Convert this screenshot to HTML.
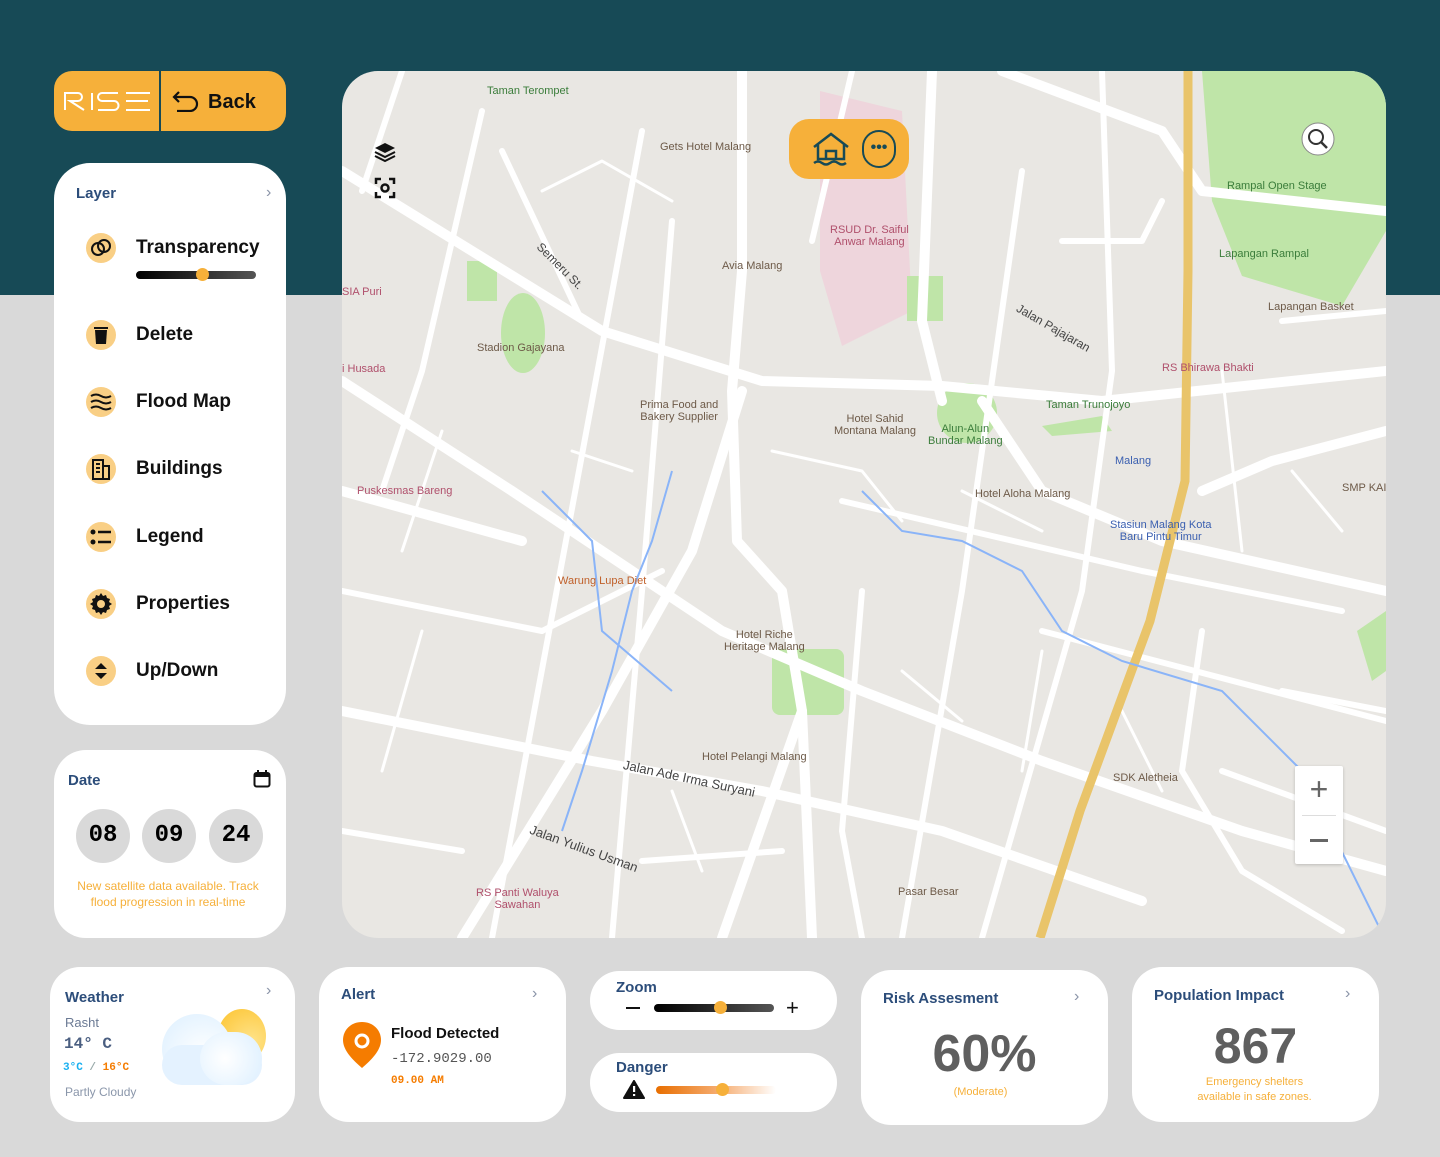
<!DOCTYPE html>
<html><head><meta charset="utf-8">
<style>
*{margin:0;padding:0;box-sizing:border-box}
body{width:1440px;height:1157px;position:relative;background:#d9d9d9;font-family:"Liberation Sans",sans-serif;overflow:hidden}
.top{position:absolute;left:0;top:0;width:1440px;height:295px;background:#174a56}
.card{position:absolute;background:#fff;border-radius:32px}
.h{color:#2c4d7a;font-size:15px;font-weight:bold}
.chev{position:absolute;color:#8a94a8;font-size:16px}
.mono{font-family:"Liberation Mono",monospace}
.item{position:absolute;left:32px;display:flex;align-items:center;font-size:19px;font-weight:bold;color:#111}
.ic{width:30px;height:30px;border-radius:50%;background:#f9cf85;display:flex;align-items:center;justify-content:center;margin-right:20px}
.lbl{position:absolute;font-size:11px;color:#6d5a48;white-space:nowrap}
.slider{position:absolute;height:8px;border-radius:4px;background:linear-gradient(90deg,#000,#555)}
.knob{position:absolute;width:13px;height:13px;border-radius:50%;background:#f6b03a;top:-3px}
</style></head><body>
<div class="top"></div>

<div style="position:absolute;left:54px;top:71px;width:232px;height:60px;background:#f6b03a;border-radius:18px">
 <div style="position:absolute;left:105px;top:0;width:2px;height:60px;background:#174a56"></div>
 <svg style="position:absolute;left:10px;top:20px" width="88" height="20" viewBox="0 0 88 20" fill="none" stroke="#fff" stroke-width="2"><path d="M1 19 V2 H14 a4 4 0 0 1 0 8 H6 L20 19"/><path d="M28 2 V19"/><path d="M54 2 H38 a4 4 0 0 0 0 8 H50 a4 4 0 0 1 0 9 H34"/><path d="M86 2 H62 M62 10 H84 M62 19 H86"/></svg>
 <svg style="position:absolute;left:118px;top:19px" width="28" height="22" viewBox="0 0 28 22"><path d="M7 2 L2 7 L7 12 M2 7 H18 a7 7 0 0 1 0 14 H5" fill="none" stroke="#111" stroke-width="2.2"/></svg>
 <div style="position:absolute;left:154px;top:20px;font-size:20px;font-weight:bold;color:#111">Back</div>
</div>

<div class="card" style="left:54px;top:163px;width:232px;height:562px;border-radius:36px">
 <div class="h" style="position:absolute;left:22px;top:22px">Layer</div>
 <div class="chev" style="left:212px;top:21px">›</div>
 <div class="item" style="top:70px"><div class="ic"><svg width="22" height="22" viewBox="0 0 22 22"><circle cx="8" cy="12" r="6" fill="none" stroke="#111" stroke-width="2"/><circle cx="14" cy="9" r="6" fill="none" stroke="#111" stroke-width="2"/></svg></div>Transparency</div>
 <div class="slider" style="left:82px;top:108px;width:120px"><div class="knob" style="left:60px"></div></div>
 <div class="item" style="top:157px"><div class="ic"><svg width="14" height="18" viewBox="0 0 14 18"><rect x="0" y="1" width="14" height="2" fill="#111"/><path d="M1 4 H13 L12 18 H2 Z" fill="#111"/></svg></div>Delete</div>
 <div class="item" style="top:224px"><div class="ic"><svg width="22" height="18" viewBox="0 0 22 18"><path d="M1 3 q5 -3 10 0 t10 0 M1 9 q5 -3 10 0 t10 0 M1 15 q5 -3 10 0 t10 0" fill="none" stroke="#111" stroke-width="2"/></svg></div>Flood Map</div>
 <div class="item" style="top:291px"><div class="ic"><svg width="20" height="22" viewBox="0 0 20 22"><path d="M2 2 H12 V21 H2 Z M12 8 H18 V21 H12" fill="none" stroke="#111" stroke-width="2"/><path d="M5 6h4M5 10h4M5 14h4" stroke="#111" stroke-width="2"/></svg></div>Buildings</div>
 <div class="item" style="top:359px"><div class="ic"><svg width="22" height="18" viewBox="0 0 22 18"><circle cx="3" cy="4" r="2.5" fill="#111"/><circle cx="3" cy="14" r="2.5" fill="#111"/><path d="M8 4H21M8 14H21" stroke="#111" stroke-width="2.5"/></svg></div>Legend</div>
 <div class="item" style="top:426px"><div class="ic"><svg width="24" height="24" viewBox="0 0 24 24"><path d="M12 1l2 3 3-1 1 3 3 1-1 3 3 2-3 2 1 3-3 1-1 3-3-1-2 3-2-3-3 1-1-3-3-1 1-3-3-2 3-2-1-3 3-1 1-3 3 1z" fill="#111"/><circle cx="12" cy="12" r="4" fill="#f9cf85"/></svg></div>Properties</div>
 <div class="item" style="top:493px"><div class="ic"><svg width="16" height="20" viewBox="0 0 16 20"><path d="M2 8 L8 2 L14 8 Z M2 12 L8 18 L14 12 Z" fill="#111"/></svg></div>Up/Down</div>
</div>

<div class="card" style="left:54px;top:750px;width:232px;height:188px">
 <div class="h" style="position:absolute;left:14px;top:22px">Date</div>
 <svg style="position:absolute;left:199px;top:20px" width="18" height="18" viewBox="0 0 18 18"><rect x="1.5" y="3" width="15" height="13.5" rx="2" fill="none" stroke="#111" stroke-width="2"/><rect x="1.5" y="3" width="15" height="4" fill="#111"/><path d="M5 0v4M13 0v4" stroke="#111" stroke-width="2"/></svg>
 <div class="mono" style="position:absolute;left:22px;top:59px;width:54px;height:54px;border-radius:50%;background:#d9d9d9;font-size:24px;font-weight:bold;text-align:center;line-height:54px">08</div>
 <div class="mono" style="position:absolute;left:88px;top:59px;width:54px;height:54px;border-radius:50%;background:#d9d9d9;font-size:24px;font-weight:bold;text-align:center;line-height:54px">09</div>
 <div class="mono" style="position:absolute;left:155px;top:59px;width:54px;height:54px;border-radius:50%;background:#d9d9d9;font-size:24px;font-weight:bold;text-align:center;line-height:54px">24</div>
 <div style="position:absolute;left:22px;top:128px;width:184px;text-align:center;color:#f6b03a;font-size:12px;line-height:16px">New satellite data available. Track flood progression in real-time</div>
</div>

<div style="position:absolute;left:342px;top:71px;width:1044px;height:867px;border-radius:36px;overflow:hidden;background:#e9e7e3">
<svg width="1044" height="867" viewBox="0 0 1044 867" style="position:absolute;left:0;top:0">
 <polygon points="860,0 1044,0 1044,160 1000,235 900,205 870,130" fill="#bfe5a8"/>
 <polygon points="478,20 560,40 570,240 500,275 478,200" fill="#eed5dc"/>
 <ellipse cx="181" cy="262" rx="22" ry="40" fill="#bfe5a8"/>
 <circle cx="625" cy="342" r="30" fill="#bfe5a8"/>
 <rect x="430" y="578" width="72" height="66" rx="8" fill="#bfe5a8"/>
 <rect x="565" y="205" width="36" height="45" fill="#bfe5a8"/>
 <rect x="125" y="190" width="30" height="40" fill="#bfe5a8"/>
 <polygon points="700,355 760,345 770,360 710,365" fill="#bfe5a8"/>
 <polygon points="1015,560 1044,540 1044,600 1030,610" fill="#bfe5a8"/>
 <g stroke="#fff" fill="none" stroke-linecap="round" stroke-linejoin="round">
  <g stroke-width="10">
   <path d="M0 100 L260 260 L420 310 L600 315 L760 330 L1044 300"/>
   <path d="M0 310 L170 420 L380 560 L520 620 L700 690 L900 760 L1044 800"/>
   <path d="M0 640 L250 690 L420 720 L600 760 L800 830"/>
   <path d="M400 0 L400 200 L390 320 L395 470 L440 520 L460 640 L470 867"/>
   <path d="M120 867 L260 640 L350 480 L400 320"/>
   <path d="M590 0 L580 250 L600 330"/>
   <path d="M640 330 L700 420 L820 470 L1044 520"/>
   <path d="M460 640 L380 867"/>
   <path d="M1044 360 L930 390 L860 420"/>
   <path d="M0 420 L180 470"/>
   <path d="M660 0 L820 60 L860 120 L1044 140"/>
  </g>
  <g stroke-width="6">
   <path d="M60 0 L20 120"/><path d="M140 40 L80 300 L40 420"/>
   <path d="M160 80 L240 250"/><path d="M300 60 L250 330 L150 867"/>
   <path d="M330 150 L300 520 L270 867"/><path d="M510 0 L470 170"/>
   <path d="M680 100 L620 520 L560 867"/><path d="M760 0 L770 300 L740 520 L640 867"/>
   <path d="M700 560 L1044 650"/><path d="M500 430 L800 500 L1000 540"/>
   <path d="M200 560 L320 500"/><path d="M520 520 L500 760 L520 867"/>
   <path d="M860 560 L840 700 L900 800 L1000 860"/><path d="M940 620 L1044 640"/>
   <path d="M0 520 L200 560"/><path d="M300 790 L440 780"/>
   <path d="M880 700 L1044 760"/><path d="M0 760 L120 780"/>
   <path d="M940 250 L1044 240"/><path d="M720 170 L800 170 L820 130"/>
  </g>
  <g stroke-width="3">
   <path d="M200 120 L260 90 L330 130"/><path d="M100 360 L60 480"/><path d="M230 380 L290 400"/>
   <path d="M430 380 L520 400 L560 450"/><path d="M620 420 L700 460"/><path d="M880 300 L900 480"/>
   <path d="M700 580 L680 700"/><path d="M560 600 L620 650"/><path d="M80 560 L40 700"/>
   <path d="M330 720 L360 800"/><path d="M780 640 L820 720"/><path d="M950 400 L1000 460"/>
  </g>
 </g>
 <path d="M846 0 L846 200 L843 410 L808 550 L738 740 L698 867" stroke="#e9c46a" stroke-width="9" fill="none"/>
 <path d="M330 400 L310 470 L290 520 L270 600 L240 700 L220 760" stroke="#8ab4f8" stroke-width="2" fill="none"/>
 <path d="M520 420 L560 460 L620 470 L680 500 L720 560 L780 590 L880 620 L960 700 L1044 870" stroke="#8ab4f8" stroke-width="2" fill="none"/>
 <path d="M200 420 L250 470 L260 560 L330 620" stroke="#8ab4f8" stroke-width="2" fill="none"/>
</svg>
 <div class="lbl" style="left:145px;top:14px;color:#3b7d3b">Taman Terompet</div>
 <div class="lbl" style="left:318px;top:70px">Gets Hotel Malang</div>
 <div class="lbl" style="left:380px;top:189px">Avia Malang</div>
 <div class="lbl" style="left:488px;top:153px;color:#b0506c;text-align:center">RSUD Dr. Saiful<br>Anwar Malang</div>
 <div class="lbl" style="left:0px;top:215px;color:#b0506c">SIA Puri</div>
 <div class="lbl" style="left:0px;top:292px;color:#b0506c">i Husada</div>
 <div class="lbl" style="left:135px;top:271px">Stadion Gajayana</div>
 <div class="lbl" style="left:298px;top:328px;text-align:center">Prima Food and<br>Bakery Supplier</div>
 <div class="lbl" style="left:492px;top:342px;text-align:center">Hotel Sahid<br>Montana Malang</div>
 <div class="lbl" style="left:586px;top:352px;color:#3b7d3b;text-align:center">Alun-Alun<br>Bundar Malang</div>
 <div class="lbl" style="left:885px;top:109px;color:#3b7d3b">Rampal Open Stage</div>
 <div class="lbl" style="left:877px;top:177px;color:#3b7d3b">Lapangan Rampal</div>
 <div class="lbl" style="left:926px;top:230px">Lapangan Basket</div>
 <div class="lbl" style="left:820px;top:291px;color:#b0506c">RS Bhirawa Bhakti</div>
 <div class="lbl" style="left:704px;top:328px;color:#3b7d3b">Taman Trunojoyo</div>
 <div class="lbl" style="left:773px;top:384px;color:#3a5fb0">Malang</div>
 <div class="lbl" style="left:633px;top:417px">Hotel Aloha Malang</div>
 <div class="lbl" style="left:768px;top:448px;color:#3a5fb0;text-align:center">Stasiun Malang Kota<br>Baru Pintu Timur</div>
 <div class="lbl" style="left:1000px;top:411px">SMP KAI</div>
 <div class="lbl" style="left:15px;top:414px;color:#b0506c">Puskesmas Bareng</div>
 <div class="lbl" style="left:216px;top:504px;color:#c0602a">Warung Lupa Diet</div>
 <div class="lbl" style="left:382px;top:558px;text-align:center">Hotel Riche<br>Heritage Malang</div>
 <div class="lbl" style="left:360px;top:680px">Hotel Pelangi Malang</div>
 <div class="lbl" style="left:771px;top:701px">SDK Aletheia</div>
 <div class="lbl" style="left:134px;top:816px;color:#b0506c;text-align:center">RS Panti Waluya<br>Sawahan</div>
 <div class="lbl" style="left:556px;top:815px">Pasar Besar</div>
 <div class="lbl" style="left:280px;top:700px;font-size:13px;color:#444;transform:rotate(12deg)">Jalan Ade Irma Suryani</div>
 <div class="lbl" style="left:185px;top:770px;font-size:13px;color:#444;transform:rotate(20deg)">Jalan Yulius Usman</div>
 <div class="lbl" style="left:670px;top:250px;font-size:12px;color:#444;transform:rotate(30deg)">Jalan Pajajaran</div>
 <div class="lbl" style="left:188px;top:188px;font-size:12px;color:#444;transform:rotate(45deg)">Semeru St.</div>
 <div style="position:absolute;left:447px;top:48px;width:120px;height:60px;border-radius:20px;background:#f6b03a">
  <svg style="position:absolute;left:22px;top:12px" width="40" height="38" viewBox="0 0 40 38"><path d="M3 16 L20 3 L37 16 M7 13 V28 H33 V13 M15 28 V20 H25 V28 M3 32 q4 -3 8 0 t8 0 t8 0 t8 0" fill="none" stroke="#174a56" stroke-width="2.5"/></svg>
  <div style="position:absolute;left:73px;top:11px;width:34px;height:38px;border:2.5px solid #174a56;border-radius:17px;text-align:center;font-weight:bold;color:#174a56;font-size:16px;line-height:32px">•••</div>
 </div>
 <svg style="position:absolute;left:32px;top:70px" width="22" height="22" viewBox="0 0 22 22"><path d="M11 2 L21 7 L11 12 L1 7 Z" fill="#111"/><path d="M1 11 L11 16 L21 11 M1 15 L11 20 L21 15" fill="none" stroke="#111" stroke-width="2"/></svg>
 <svg style="position:absolute;left:32px;top:106px" width="22" height="22" viewBox="0 0 22 22"><path d="M2 7V2H7M15 2H20V7M20 15V20H15M7 20H2V15" fill="none" stroke="#111" stroke-width="2.5"/><circle cx="11" cy="11" r="3.5" fill="none" stroke="#111" stroke-width="2.5"/></svg>
 <svg style="position:absolute;left:958px;top:50px" width="36" height="36" viewBox="0 0 36 36"><circle cx="18" cy="18" r="16" fill="#fff" stroke="#888"/><circle cx="16" cy="16" r="7" fill="none" stroke="#333" stroke-width="2"/><path d="M21 21 L27 27" stroke="#333" stroke-width="2.5"/></svg>
 <div style="position:absolute;left:953px;top:695px;width:48px;height:98px;background:#fff;border-radius:2px;box-shadow:0 1px 3px rgba(0,0,0,.2)">
  <div style="position:absolute;left:0;top:3px;width:48px;text-align:center;font-size:32px;color:#666;line-height:40px">+</div>
  <div style="position:absolute;left:7px;top:49px;width:34px;height:1px;background:#ddd"></div>
  <div style="position:absolute;left:15px;top:73px;width:18px;height:3px;background:#666"></div>
 </div>
</div>

<div class="card" style="left:50px;top:967px;width:245px;height:155px;border-radius:30px">
 <div class="h" style="position:absolute;left:15px;top:22px">Weather</div>
 <div class="chev" style="left:216px;top:15px">›</div>
 <div style="position:absolute;left:15px;top:48px;font-size:13px;color:#6b7a94">Rasht</div>
 <div class="mono" style="position:absolute;left:14px;top:68px;font-size:16px;font-weight:bold;color:#4a5e80">14° C</div>
 <div class="mono" style="position:absolute;left:13px;top:95px;font-size:11px;font-weight:bold"><span style="color:#1ab0f0">3°C</span> <span style="color:#9aa">/</span> <span style="color:#f57c00">16°C</span></div>
 <div style="position:absolute;left:15px;top:118px;font-size:12px;color:#8a96aa">Partly Cloudy</div>
 <div style="position:absolute;left:168px;top:42px;width:48px;height:54px;border-radius:50%;background:radial-gradient(circle at 70% 60%,#ffe38a,#fcc32e)"></div>
 <div style="position:absolute;left:112px;top:47px;width:70px;height:70px;border-radius:50%;background:radial-gradient(circle at 60% 60%,#fff,#dcefff)"></div>
 <div style="position:absolute;left:112px;top:78px;width:100px;height:40px;border-radius:20px;background:#e4f2ff"></div>
 <div style="position:absolute;left:150px;top:65px;width:62px;height:53px;border-radius:27px;background:radial-gradient(circle at 40% 50%,#fff,#dcefff)"></div>
</div>

<div class="card" style="left:319px;top:967px;width:247px;height:155px;border-radius:30px">
 <div class="h" style="position:absolute;left:22px;top:19px">Alert</div>
 <div class="chev" style="left:213px;top:18px">›</div>
 <svg style="position:absolute;left:23px;top:54px" width="40" height="48" viewBox="0 0 40 48"><path d="M20 1 C9 1 1 9 1 19 C1 30 12 40 20 47 C28 40 39 30 39 19 C39 9 31 1 20 1 Z" fill="#f57c00"/><circle cx="20" cy="20" r="6" fill="none" stroke="#fff" stroke-width="3"/></svg>
 <div style="position:absolute;left:72px;top:58px;font-size:15px;font-weight:bold;color:#111">Flood Detected</div>
 <div class="mono" style="position:absolute;left:72px;top:84px;font-size:14px;color:#555">-172.9029.00</div>
 <div class="mono" style="position:absolute;left:72px;top:108px;font-size:11px;font-weight:bold;color:#f57c00">09.00 AM</div>
</div>

<div class="card" style="left:590px;top:971px;width:247px;height:59px;border-radius:30px">
 <div class="h" style="position:absolute;left:26px;top:8px">Zoom</div>
 <div style="position:absolute;left:36px;top:36px;width:14px;height:2px;background:#111"></div>
 <div class="slider" style="left:64px;top:33px;width:120px"><div class="knob" style="left:60px"></div></div>
 <div style="position:absolute;left:196px;top:24px;font-size:22px;color:#111">+</div>
</div>

<div class="card" style="left:590px;top:1053px;width:247px;height:59px;border-radius:30px">
 <div class="h" style="position:absolute;left:26px;top:6px">Danger</div>
 <svg style="position:absolute;left:33px;top:27px" width="22" height="19" viewBox="0 0 22 19"><path d="M11 1 L21 18 H1 Z" fill="#111" stroke="#111" stroke-linejoin="round" stroke-width="2"/><rect x="10" y="6" width="2.2" height="6" fill="#fff"/><rect x="10" y="14" width="2.2" height="2" fill="#fff"/></svg>
 <div class="slider" style="left:66px;top:33px;width:120px;background:linear-gradient(90deg,#e86e00,#f6b077 55%,#fff)"><div class="knob" style="left:60px"></div></div>
</div>

<div class="card" style="left:861px;top:970px;width:247px;height:155px;border-radius:30px">
 <div class="h" style="position:absolute;left:22px;top:20px">Risk Assesment</div>
 <div class="chev" style="left:213px;top:18px">›</div>
 <div style="position:absolute;left:0;top:54px;width:247px;text-align:center;font-size:52px;font-weight:bold;color:#5f5f5f">60%</div>
 <div style="position:absolute;left:0;top:116px;width:239px;text-align:center;font-size:11px;color:#f6b03a">(Moderate)</div>
</div>

<div class="card" style="left:1132px;top:967px;width:247px;height:155px;border-radius:30px">
 <div class="h" style="position:absolute;left:22px;top:20px">Population Impact</div>
 <div class="chev" style="left:213px;top:18px">›</div>
 <div style="position:absolute;left:0;top:50px;width:247px;text-align:center;font-size:50px;font-weight:bold;color:#5f5f5f">867</div>
 <div style="position:absolute;left:0;top:108px;width:245px;text-align:center;font-size:11px;line-height:15px;color:#f6b03a">Emergency shelters<br>available in safe zones.</div>
</div>
</body></html>
